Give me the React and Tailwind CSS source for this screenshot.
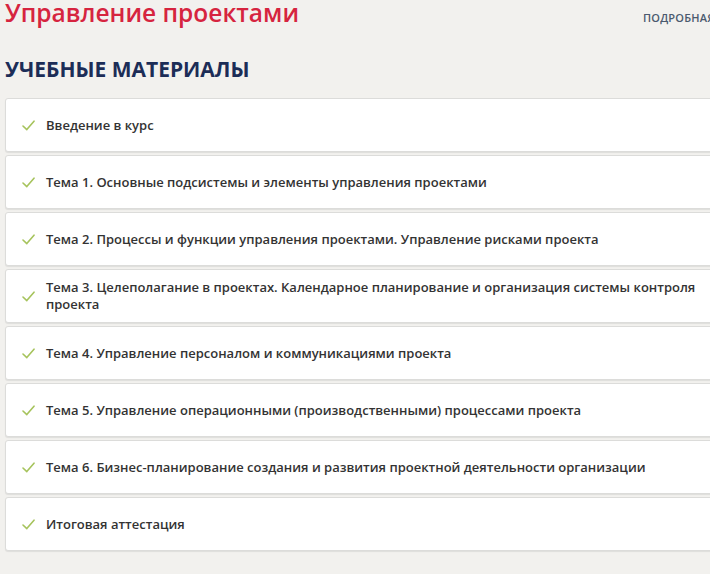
import React from "react";

const topics = [
  "Введение в курс",
  "Тема 1. Основные подсистемы и элементы управления проектами",
  "Тема 2. Процессы и функции управления проектами. Управление рисками проекта",
  "Тема 3. Целеполагание в проектах. Календарное планирование и организация системы контроля проекта",
  "Тема 4. Управление персоналом и коммуникациями проекта",
  "Тема 5. Управление операционными (производственными) процессами проекта",
  "Тема 6. Бизнес-планирование создания и развития проектной деятельности организации",
  "Итоговая аттестация",
];

function Check() {
  return (
    <svg width="13" height="11" viewBox="0 0 13 11" fill="none" className="shrink-0">
      <path d="M1 6 L4.8 9.6 L12 1.2" stroke="#a6c35c" strokeWidth="1.6" strokeLinecap="round" strokeLinejoin="round" />
    </svg>
  );
}

export default function App() {
  return (
    <div
      className="w-[710px] h-[574px] overflow-hidden bg-[#f2f1ee]"
      style={{ fontFamily: '"Open Sans", "Noto Sans", sans-serif' }}
    >
      {/* header */}
      <div className="flex items-start justify-between pl-[5px] h-[36px] whitespace-nowrap">
        <h1 className="text-[24.5px] leading-[26px] font-semibold text-[#d6243f]">
          Управление проектами
        </h1>
        <span className="mt-[10px] text-[11px] font-semibold text-[#4b5a6e] tracking-[0.2px] w-[67px] overflow-hidden">
          ПОДРОБНАЯ
        </span>
      </div>

      <h2 className="pl-[5px] mt-[19px] text-[21px] leading-[28px] font-bold text-[#1c2d57]">
        УЧЕБНЫЕ МАТЕРИАЛЫ
      </h2>

      {/* list */}
      <div className="mt-[15px] ml-[5px] w-[760px] flex flex-col gap-[3px]">
        {topics.map((t) => (
          <div
            key={t}
            className="h-[54px] flex items-center gap-[11px] pl-[16px] pr-[56px] bg-white border border-[#dcdcda] rounded-[3px] shadow-[0_1px_1px_rgba(0,0,0,0.08)]"
          >
            <Check />
            <span className="text-[13px] leading-[17px] font-semibold text-[#333]">{t}</span>
          </div>
        ))}
      </div>
    </div>
  );
}
